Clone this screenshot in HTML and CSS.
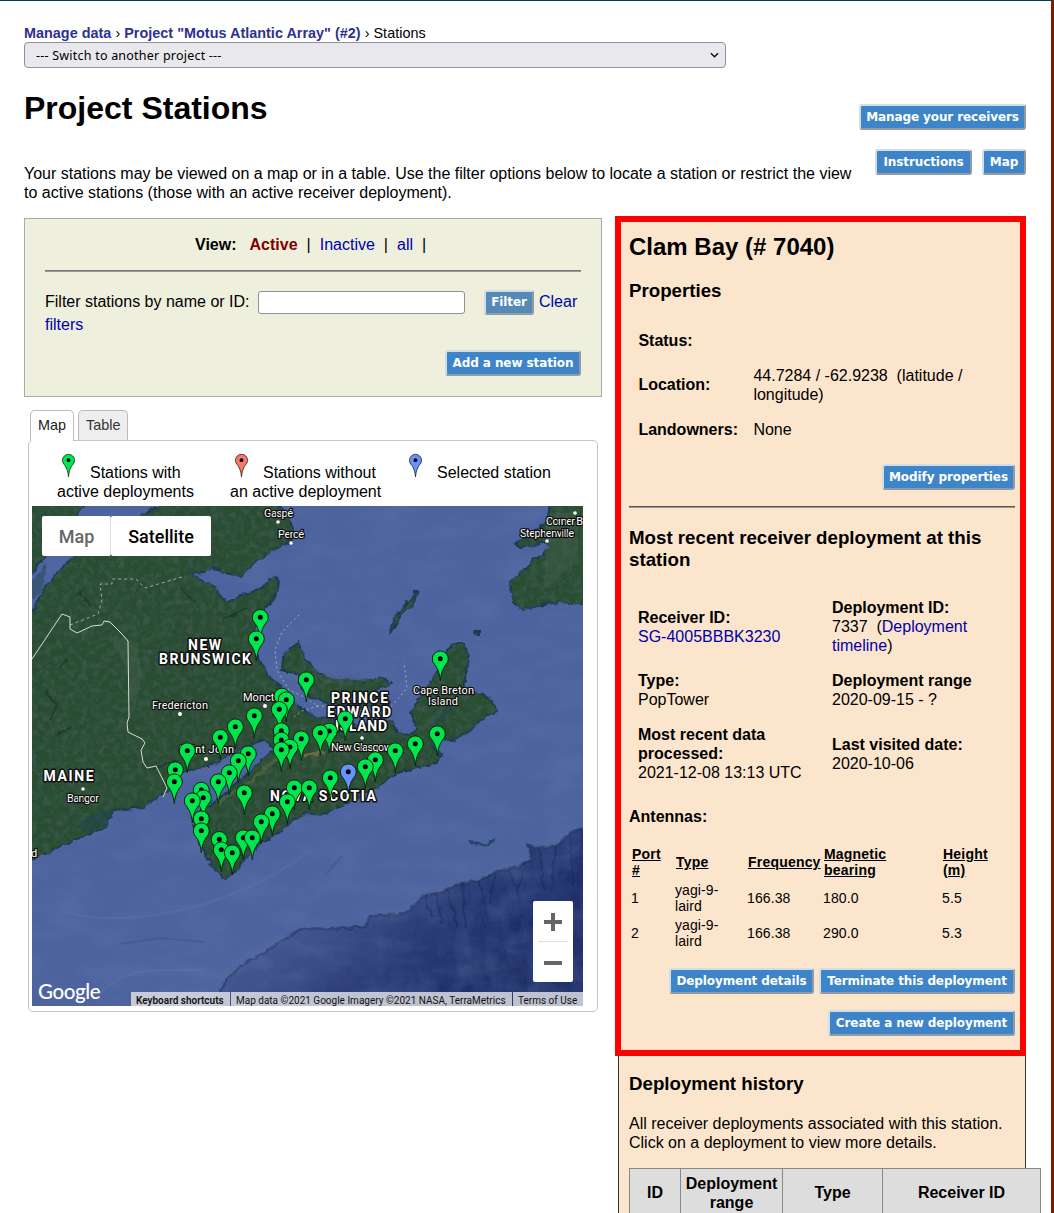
FILE: index.html
```html
<!DOCTYPE html>
<html lang="en">
<head>
<meta charset="utf-8">
<title>Project Stations</title>
<link rel="stylesheet" href="styles.css">
</head>
<body>
<div class="page">
  <nav class="crumbs"><a href="#">Manage data</a> › <a href="#">Project "Motus Atlantic Array" (#2)</a> › Stations</nav>
  <div class="switcher"><span>--- Switch to another project ---</span>
    <svg width="9" height="7" viewBox="0 0 10 7"><path d="M1 1l4 4 4-4" fill="none" stroke="#111" stroke-width="1.6"/></svg>
  </div>
  <header class="head">
    <div class="intro">
      <h1>Project Stations</h1>
      <p>Your stations may be viewed on a map or in a table. Use the filter options below to locate a station or restrict the view to active stations (those with an active receiver deployment).</p>
    </div>
    <div class="head-actions">
      <button class="btn" style="width:167px">Manage your receivers</button>
      <div class="pair"><button class="btn" style="width:97px">Instructions</button><button class="btn" style="width:44px">Map</button></div>
    </div>
  </header>

  <div class="columns">
    <main class="left">
      <section class="filters">
        <div class="view"><b>View:</b><b class="on">Active</b><i>|</i><a href="#">Inactive</a><i>|</i><a href="#">all</a><i>|</i></div>
        <hr>
        <div class="filter-line"><label>Filter stations by name or ID:</label><input type="text"><button class="btn filter-btn" style="width:50px">Filter</button><a href="#">Clear</a></div>
        <div class="filter-rest"><a href="#">filters</a></div>
        <div class="right"><button class="btn" style="width:136px">Add a new station</button></div>
      </section>

      <div class="tabs"><span class="tab current">Map</span><span class="tab">Table</span></div>
      <section class="map-panel">
        <svg class="defs" width="0" height="0">
          <symbol id="pin" viewBox="-10 -10 20 34" overflow="visible">
            <path d="M0 22C-1 13-3 9.500-5.500 6A8 8 0 1 1 5.500 6C3 9.500 1 13 0 22Z" stroke="#06250c" stroke-width="1"/>
            <circle r="2.500" fill="#000"/>
          </symbol>
        </svg>
        <div class="legend">
          <div class="key k1"><svg width="15" height="25" viewBox="-9.500 -9.500 19 33"><use href="#pin" x="-10" y="-10" width="20" height="34" fill="#00e64d"/></svg>Stations with<br>active deployments</div>
          <div class="key k2"><svg width="15" height="25" viewBox="-9.500 -9.500 19 33"><use href="#pin" x="-10" y="-10" width="20" height="34" fill="#fd7567"/></svg>Stations without<br>an active deployment</div>
          <div class="key k3"><svg width="15" height="25" viewBox="-9.500 -9.500 19 33"><use href="#pin" x="-10" y="-10" width="20" height="34" fill="#6991fd"/></svg>Selected station</div>
        </div>
        <div class="map">
          <svg class="terrain" width="551" height="500" viewBox="32 506 551 500">
            <defs>
              <linearGradient id="deep" gradientUnits="userSpaceOnUse" x1="340" y1="900" x2="440" y2="1010"><stop offset="0" stop-color="#43558e"/><stop offset=".5" stop-color="#2d3d76"/><stop offset="1" stop-color="#203069"/></linearGradient>
              <filter id="landTex" x="0" y="0" width="100%" height="100%">
                <feTurbulence type="fractalNoise" baseFrequency=".16" numOctaves="5" seed="4" result="n"/>
                <feColorMatrix in="n" values="0 0 0 0 .07  0 0 0 0 .13  0 0 0 0 .12  1 0 0 0 -.4" result="t"/>
                <feComposite in="t" in2="SourceAlpha" operator="in" result="c"/>
                <feMerge><feMergeNode in="SourceGraphic"/><feMergeNode in="c"/></feMerge>
              </filter>
              <filter id="seaTex" x="0" y="0" width="100%" height="100%">
                <feTurbulence type="fractalNoise" baseFrequency=".022 .05" numOctaves="4" seed="9"/>
                <feColorMatrix values="0 0 0 0 .14  0 0 0 0 .20  0 0 0 0 .40  .55 0 0 0 -.22"/>
              </filter>
              <filter id="deepTex" x="0" y="0" width="100%" height="100%">
                <feTurbulence type="fractalNoise" baseFrequency=".07 .03" numOctaves="4" seed="3" result="n"/>
                <feColorMatrix in="n" values="0 0 0 0 .04  0 0 0 0 .08  0 0 0 0 .25  .8 0 0 0 -.3" result="t"/>
                <feComposite in="t" in2="SourceAlpha" operator="in" result="c"/>
                <feMerge><feMergeNode in="SourceGraphic"/><feMergeNode in="c"/></feMerge>
              </filter>
              <filter id="rough" x="-5%" y="-5%" width="110%" height="110%"><feTurbulence type="fractalNoise" baseFrequency=".13" numOctaves="3" seed="2"/><feDisplacementMap in="SourceGraphic" scale="6" xChannelSelector="R" yChannelSelector="G"/></filter>
            </defs>
            <rect x="32" y="506" width="551" height="500" fill="#4d639f"/>
            <g filter="url(#rough)"><path filter="url(#deepTex)" fill="url(#deep)" d="M590 825L571 832L556 845L540 848L528 845L532 859L520 866L500 871L479 880L458 885L440 893L424 895L415 905L404 914L370 916L366 926L340 929L302 928L285 939L265 952L244 963L229 976L221 991L214 1012H590Z"/>
            <path fill="none" stroke="#1b284c" stroke-width="2.500" opacity=".45" d="M590 825L571 832L556 845L540 848L528 845L532 859L520 866L500 871L479 880L458 885L440 893L424 895L415 905L404 914L370 916L366 926L340 929L302 928L285 939L265 952L244 963L229 976L221 991L214 1012"/>
            <path fill="none" stroke="#18264f" stroke-width="2" opacity=".5" d="M424 895l8 22M436 893l6 30M447 890l12 40M462 884l4 44M479 880l8 36M495 874l-6 30M510 869l10 34M526 862l-8 28M540 850l4 40M556 845l-5 45M570 835l3 48M583 830l-4 46"/></g>
            <rect x="32" y="506" width="551" height="500" filter="url(#seaTex)"/>
            <g fill="none" stroke="#647ab3" opacity=".3"><path stroke-width="2" d="M95 1000C120 966 150 970 205 970M60 910C130 935 250 900 310 850"/><path stroke="#33477f" stroke-width="2" d="M120 944L160 938L205 942M325 875L342 856"/></g>
            <g filter="url(#rough)">
              <g fill="#2c4d33" stroke="#1e3a50" stroke-width="2" filter="url(#landTex)">
                <path d="M20 500H88L70 525L52 548L32 572L20 590Z"/>
                <path d="M20 622L34 608L45 586L70 560L100 535L135 519L168 500H274L287 515L293 528L292 540L272 550L255 562L240 576L225 573L212 567L205 573L190 574L200 580L215 587L222 598L228 602L238 597L250 592L262 588L270 580L276 577L279 584L276 596L268 605L262 614L254 633L260 663L268 676L288 693L298 705L310 716L328 720L345 720L360 727L376 722L393 721L398 733L410 734L417 729L411 713L417 700L430 684L440 667L448 651L453 643L464 643L469 657L466 675L461 691L474 693L483 694L492 701L496 711L482 719L470 731L452 740L440 739L432 745L440 754L437 763L417 767L397 773L377 787L360 797L341 806L320 815L307 813L290 822L278 833L263 841L247 855L237 872L223 878L213 868L202 849L194 825L197 812L217 800L243 778L269 753L284 744L273 747L263 740L237 751L210 765L180 774L174 787L167 792L143 807L115 810L103 829L73 840L47 853L20 865Z"/>
                <path d="M299 642L304 658L317 673L333 680L360 681L383 678L392 683L374 691L390 700L388 707L360 708L330 703L310 697L300 688L299 674L281 670L284 654Z"/>
                <path d="M550 500L548 521L535 532L516 544L519 548L546 543L552 547L533 560L510 583L513 602L523 609L545 605L560 602L590 604V500Z"/>
                <path d="M417 593L413 605L402 613L395 628L391 631L395 617L406 603Z"/><path d="M414 591h3v2h-3zM475 631h4v3h-4z"/>
              </g>
              <path fill="#4a6350" opacity=".35" d="M110 635l28 7 3 38-8 37-7-50zM300 655l20 20 65 4-60 5zM548 515l30-5v50l-35 30z"/>
              <path fill="none" stroke="#566a43" stroke-width="4" opacity=".6" d="M217 803L250 782L275 760L290 750M274 710L282 738"/>
              <path fill="none" stroke="#8b7149" stroke-width="3" opacity=".75" d="M302 756L324 752"/>
              <path fill="#1e4550" opacity=".5" d="M78 825L98 812L115 808L108 823L90 834ZM32 580l15-16-6 28-9 8ZM428 727l28-28-10 20z"/>
              <path fill="none" stroke="#172e2d" stroke-width="2" opacity=".6" d="M45 690l12 17-8 12M57 735l13-9M150 770l28-10M195 603l-15-15M78 592l13 14M60 668l7-8M205 660l20-10M222 620l25-12"/>
              <path fill="none" stroke="#24486b" stroke-width="3" d="M470 840Q484 851 496 839"/>
            </g>
            <g fill="none" stroke="#d8dbd8" stroke-width="1">
              <path d="M32 659L62 614L70 617V629L77 633L92 626L102 625L104 621L110 622L122 634L128 641L129 717L127 723L128 732L142 739L145 743L141 750L143 762L147 768L156 766L167 788L163 797"/>
              <path stroke-dasharray="3 3" d="M70 625L98 614L102 600L100 584H112V579H136L145 588L185 576" opacity=".65"/>
              <path stroke-dasharray="2 3" d="M299 615L282 632L275 650L277 670L289 690L304 697L318 706L302 711L294 717M317 706L390 708L407 688L404 662" opacity=".6"/>
            </g>
            <g class="place">
              <text x="264" y="517" textLength="29">Gaspé</text><text x="278" y="538" textLength="26">Percé</text>
              <text x="546" y="525" textLength="37">Corner B</text><text x="520" y="537" textLength="54">Stephenville</text>
              <text x="152" y="709" textLength="56">Fredericton</text><text x="243" y="701">Moncton</text><text x="179" y="753" textLength="55">Saint John</text>
              <text x="67" y="802" textLength="32">Bangor</text><text x="413" y="694" textLength="61">Cape Breton</text><text x="428" y="705" textLength="30">Island</text>
              <text x="331" y="751" textLength="61">New Glasgow</text><text x="31" y="857">d</text>
            </g>
            <g fill="#fff"><circle cx="278" cy="522" r="1.800"/><circle cx="291" cy="543" r="1.800"/><circle cx="575" cy="513" r="1.800"/><circle cx="547" cy="541" r="1.800"/><circle cx="180" cy="714" r="2"/><circle cx="265" cy="706" r="2"/><circle cx="206" cy="759" r="2"/><circle cx="83" cy="789" r="1.800"/><circle cx="362" cy="738" r="1.800"/></g>
            <g class="region">
              <text x="188" y="650" textLength="33">NEW</text><text x="159" y="664" textLength="92">BRUNSWICK</text><text x="43.500" y="781" textLength="50">MAINE</text>
              <text x="331" y="703" textLength="57">PRINCE</text><text x="327" y="717" textLength="64">EDWARD</text><text x="335" y="731" textLength="52">ISLAND</text>
              <text x="270" y="801" textLength="106">NOVA SCOTIA</text>
            </g>
            <g id="pins"></g>
          </svg>
          <div class="map-type"><span class="mt-map">Map</span><span>Satellite</span></div>
          <div class="zoomer"><svg width="40" height="81" viewBox="0 0 40 81"><path d="M11 21h18M20 12v18M11 62h18" stroke="#666" stroke-width="4"/><path d="M5 40.500h30" stroke="#e0e0e0"/></svg></div>
          <div class="google">Google</div>
          <div class="credits"><b>Keyboard shortcuts</b><span>Map data ©2021 Google Imagery ©2021 NASA, TerraMetrics</span><em>Terms of Use</em></div>
        </div>
      </section>
    </main>

    <aside class="station">
      <div class="highlight"></div>
      <h2>Clam Bay (# 7040)</h2>
      <h3 class="h-prop">Properties</h3>
      <dl class="props">
        <dt>Status:</dt><dd></dd>
        <dt>Location:</dt><dd>44.7284 / -62.9238&nbsp; (latitude / longitude)</dd>
        <dt>Landowners:</dt><dd>None</dd>
      </dl>
      <div class="right"><button class="btn" style="width:133px">Modify properties</button></div>
      <hr>
      <h3 class="h-dep">Most recent receiver deployment at this station</h3>
      <div class="facts">
        <div><b>Receiver ID:</b><br><a href="#">SG-4005BBBK3230</a></div>
        <div><b>Deployment ID:</b><br>7337&nbsp; (<a href="#">Deployment<br>timeline</a>)</div>
        <div><b>Type:</b><br>PopTower</div>
        <div><b>Deployment range</b><br>2020-09-15 - ?</div>
        <div><b>Most recent data processed:</b><br>2021-12-08 13:13 UTC</div>
        <div><b>Last visited date:</b><br>2020-10-06</div>
      </div>
      <h4>Antennas:</h4>
      <table class="antennas">
        <colgroup><col style="width:44px"><col style="width:72px"><col style="width:76px"><col style="width:119px"><col style="width:75px"></colgroup>
        <tr><th>Port #</th><th>Type</th><th>Frequency</th><th>Magnetic<br>bearing</th><th>Height<br>(m)</th></tr>
        <tr><td>1</td><td>yagi-9-<br>laird</td><td>166.38</td><td>180.0</td><td>5.5</td></tr>
        <tr><td>2</td><td>yagi-9-<br>laird</td><td>166.38</td><td>290.0</td><td>5.3</td></tr>
      </table>
      <div class="dep-actions"><button class="btn" style="width:145px">Deployment details</button><button class="btn" style="width:196px">Terminate this deployment</button></div>
      <div class="right create"><button class="btn" style="width:187px">Create a new deployment</button></div>
      <h3 class="h-hist">Deployment history</h3>
      <p>All receiver deployments associated with this station. Click on a deployment to view more details.</p>
      <div class="history"><div>ID</div><div>Deployment range</div><div>Type</div><div>Receiver ID</div></div>
    </aside>
  </div>
</div>
<script src="pins.js"></script>
</body>
</html>
```
FILE: styles.css
```css
* { box-sizing: border-box; }
body { margin: 0; background: #fff; color: #000; font: 16px/19px "Liberation Sans", Arial, sans-serif; }
.page { height: 1213px; overflow: hidden; border-top: 1px solid #003a5d; border-right: 3px solid #7f1c00; padding: 24px 25px 0 24px; }
a { color: #00a; text-decoration: none; }
h1, h2, h3, h4, p, dl, dd { margin: 0; }
.crumbs { font-size: 14.4px; line-height: 17px; letter-spacing: .02px; }
.crumbs a { color: #2e3192; font-weight: bold; }
.switcher { display: flex; align-items: center; justify-content: space-between; width: 702px; height: 26px; padding: 1px 6px 0 11px; border: 1px solid #8f8f9d; border-radius: 4px; background: #e9e9ed; font: 12.5px/24px "Noto Sans", sans-serif; letter-spacing: .22px; }

.head { display: flex; justify-content: space-between; height: 150px; padding-top: 21px; }
.intro { width: 834px; }
h1 { font-size: 32px; line-height: 38px; margin-bottom: 37px; }
.head-actions { display: flex; flex-direction: column; align-items: flex-end; gap: 19px; padding-top: 15px; }
.pair { display: flex; gap: 10px; }
.btn { height: 26px; padding: 0; border: 2px solid; border-color: #d3dde6 #919ba5 #919ba5 #d3dde6; border-radius: 3px; background: #3d85c8; color: #fff; font: bold 12px/20px "DejaVu Sans", Verdana, sans-serif; white-space: nowrap; letter-spacing: -.1px; }
.right { display: flex; justify-content: flex-end; }

.columns { display: flex; justify-content: space-between; align-items: flex-start; }
.left { width: 578px; }
.filters { height: 179px; padding: 16px 20px 0; border: 1px solid #aaa; background: #eeefdd; }
.view { display: flex; padding-left: 150px; }
.view .on { color: #800000; margin-left: 13px; }
.view i { font-style: normal; margin: 0 9px; }
hr { height: 2px; margin: 0; border: 0; border-top: 1px solid #777; border-bottom: 1px solid #999; }
.filters hr { margin: 16px 0 17px; }
.filter-line { display: flex; align-items: center; height: 26px; line-height: 23px; }
.filter-line label { width: 213px; height: 25px; white-space: nowrap; }
.filter-line input { width: 207px; height: 23px; margin: 0 19px 0 0; border: 1px solid #8f8f9d; border-radius: 3px; background: #fff; }
.filter-line .filter-btn { height: 25px; margin-right: 5px; background: #558ab4; }
.filter-line > a { height: 25px; }
.filter-rest { line-height: 20px; }
.filters .right { margin-top: 15px; }

.tabs { display: flex; gap: 4px; margin: 13px 0 0 6px; height: 30px; font-size: 14.4px; color: #333; }
.tab { height: 30px; line-height: 29px; padding: 0 7px; border: 1px solid #bbb; border-bottom: 0; border-radius: 5px 5px 0 0; background: #eee; }
.tab.current { height: 31px; background: #fff; z-index: 1; color: #222; }
.map-panel { width: 570px; height: 572px; margin-left: 4px; padding: 12px 3px 0; border: 1px solid #c4c4c4; border-radius: 5px; }
.defs { display: block; position: absolute; }
.legend { display: flex; height: 53px; }
.key { white-space: nowrap; padding: 0 0 0 25px; line-height: 19px; }
.k1 { width: 173px; }
.k2 { width: 174px; }
.key svg { margin: 0 14px 0 4px; vertical-align: 0; overflow: visible; }

.map { position: relative; width: 551px; height: 500px; overflow: hidden; font-family: Roboto, sans-serif; }
.terrain { display: block; }
.place { font: 11px Roboto, sans-serif; fill: #fff; stroke: #111; stroke-width: 2.5px; paint-order: stroke; stroke-linejoin: round; }
.region { font: bold 14px Roboto, sans-serif; fill: #fff; stroke: #111; stroke-width: 3px; paint-order: stroke; stroke-linejoin: round; }
.map-type { position: absolute; left: 10px; top: 10px; display: flex; height: 40px; font-size: 18px; font-weight: 500; line-height: 41px; text-align: center; }
.map-type span { width: 100px; background: #fff; border-radius: 2px; }
.map-type .mt-map { width: 69px; padding-left: 1px; color: #666; border-right: 1px solid #ddd; }
.zoomer { position: absolute; left: 501px; top: 395px; width: 40px; height: 81px; background: #fff; border-radius: 2px; }
.google { position: absolute; left: 6px; top: 471px; color: #fff; font: 500 20.5px/28px Lato, sans-serif; letter-spacing: -.4px; }
.credits { position: absolute; right: 0; bottom: 0; display: flex; gap: 1px; height: 14px; color: #111; font-size: 10px; line-height: 17px; white-space: nowrap; }
.credits > * { padding: 0 5px; background: rgba(229, 229, 233, .8); font-style: normal; }
.credits b { width: 99px; font-weight: 600; letter-spacing: 0; }
.credits span { width: 281px; letter-spacing: 0; }
.credits em { width: 70px; }

.station { position: relative; width: 408px; height: 1000px; padding: 14px 10px 0; border: 1px solid #333; background: #fce5cd; }
.highlight { position: absolute; left: -4px; top: -3px; width: 411px; height: 840px; border: 6px solid #f00; }
h2 { font-size: 24px; line-height: 28px; }
h3 { font-size: 18.72px; line-height: 22px; }
.h-prop { margin-top: 19px; }
.props { display: grid; grid-template-columns: 115px 262px; row-gap: 16px; align-items: center; margin: 29px 0 0 9.4px; }
.props dt { font-weight: bold; min-height: 19px; }
.props dt:nth-of-type(2) { margin-top: -2px; }
.station > .right { margin-top: 25px; }
.station hr { margin: 16px 0 19px; border-top-color: #555; }
.facts { display: grid; grid-template-columns: 194px 170px; row-gap: 16px; align-items: center; margin: 27px 0 0 9px; }
h4 { margin-top: 25px; font-size: 16px; line-height: 19px; }
.antennas { width: 386px; margin-top: 19px; table-layout: fixed; border-collapse: separate; border-spacing: 0; font-size: 14px; line-height: 16px; }
.antennas th { padding: 1px 3px 3px; text-align: left; text-decoration: underline; letter-spacing: .2px; }
.antennas td { padding: 1px 2px 2px; letter-spacing: .1px; }
.antennas td, .antennas th { vertical-align: middle; }
.dep-actions { display: flex; justify-content: flex-end; gap: 5px; margin-top: 17px; }
.station > .create { margin-top: 16px; }
.h-hist { margin: 37px 0 19px; }
.history { display: grid; grid-template-columns: 50px 102px 100px 158px; width: 412px; height: 52px; margin-top: 16px; border: 1px solid #888; background: #ddd; font-weight: bold; text-align: center; }
.history div { display: flex; align-items: center; justify-content: center; height: 51px; padding-bottom: 4px; border-left: 1px solid #888; }
.history div:first-child { border-left: 0; }
```
FILE: pins.js
```js
// Station positions on the map canvas: [x, y] of the marker's dot.
const stations = [
  [260.3, 617.3], [256.3, 638.7], [440.3, 658.7], [306.3, 679.7], [282, 696], [286.3, 699.7], [279.3, 709.3],
  [254.3, 715.7], [345.3, 718.7], [235.3, 726.7], [281.3, 730.7], [329.3, 731], [320.3, 732.7], [437.3, 733.7],
  [220.3, 737.3], [301.3, 738.7], [281.3, 740], [415.3, 743.7], [290, 747], [281.3, 749.7], [187.3, 750.7],
  [395.3, 750.7], [248.3, 753.7], [375.3, 759.7], [238.3, 760.7], [365.3, 766.7], [175.3, 769.7], [229.3, 772.7],
  [348.3, 771.7, "#6991fd"], [330.3, 777.7], [174.3, 781.7], [218.3, 781.7], [294.3, 787.7], [309.3, 787.7],
  [201.3, 790], [244.3, 792.7], [203.3, 797.7], [192.3, 800.7], [287.3, 801.7], [272.3, 813.7], [201.3, 818.7],
  [261.3, 821.7], [201.3, 830.7], [243.3, 837.7], [252.3, 837.7], [219.3, 839.3], [221.3, 849.7], [232.3, 852.7]
];
const layer = document.getElementById("pins");
for (const [x, y, fill] of stations) {
  const pin = document.createElementNS("http://www.w3.org/2000/svg", "use");
  pin.setAttribute("href", "#pin");
  pin.setAttribute("x", x - 10);
  pin.setAttribute("y", y - 10);
  pin.setAttribute("width", 20);
  pin.setAttribute("height", 34);
  pin.setAttribute("fill", fill || "#00e64d");
  layer.appendChild(pin);
}
```
